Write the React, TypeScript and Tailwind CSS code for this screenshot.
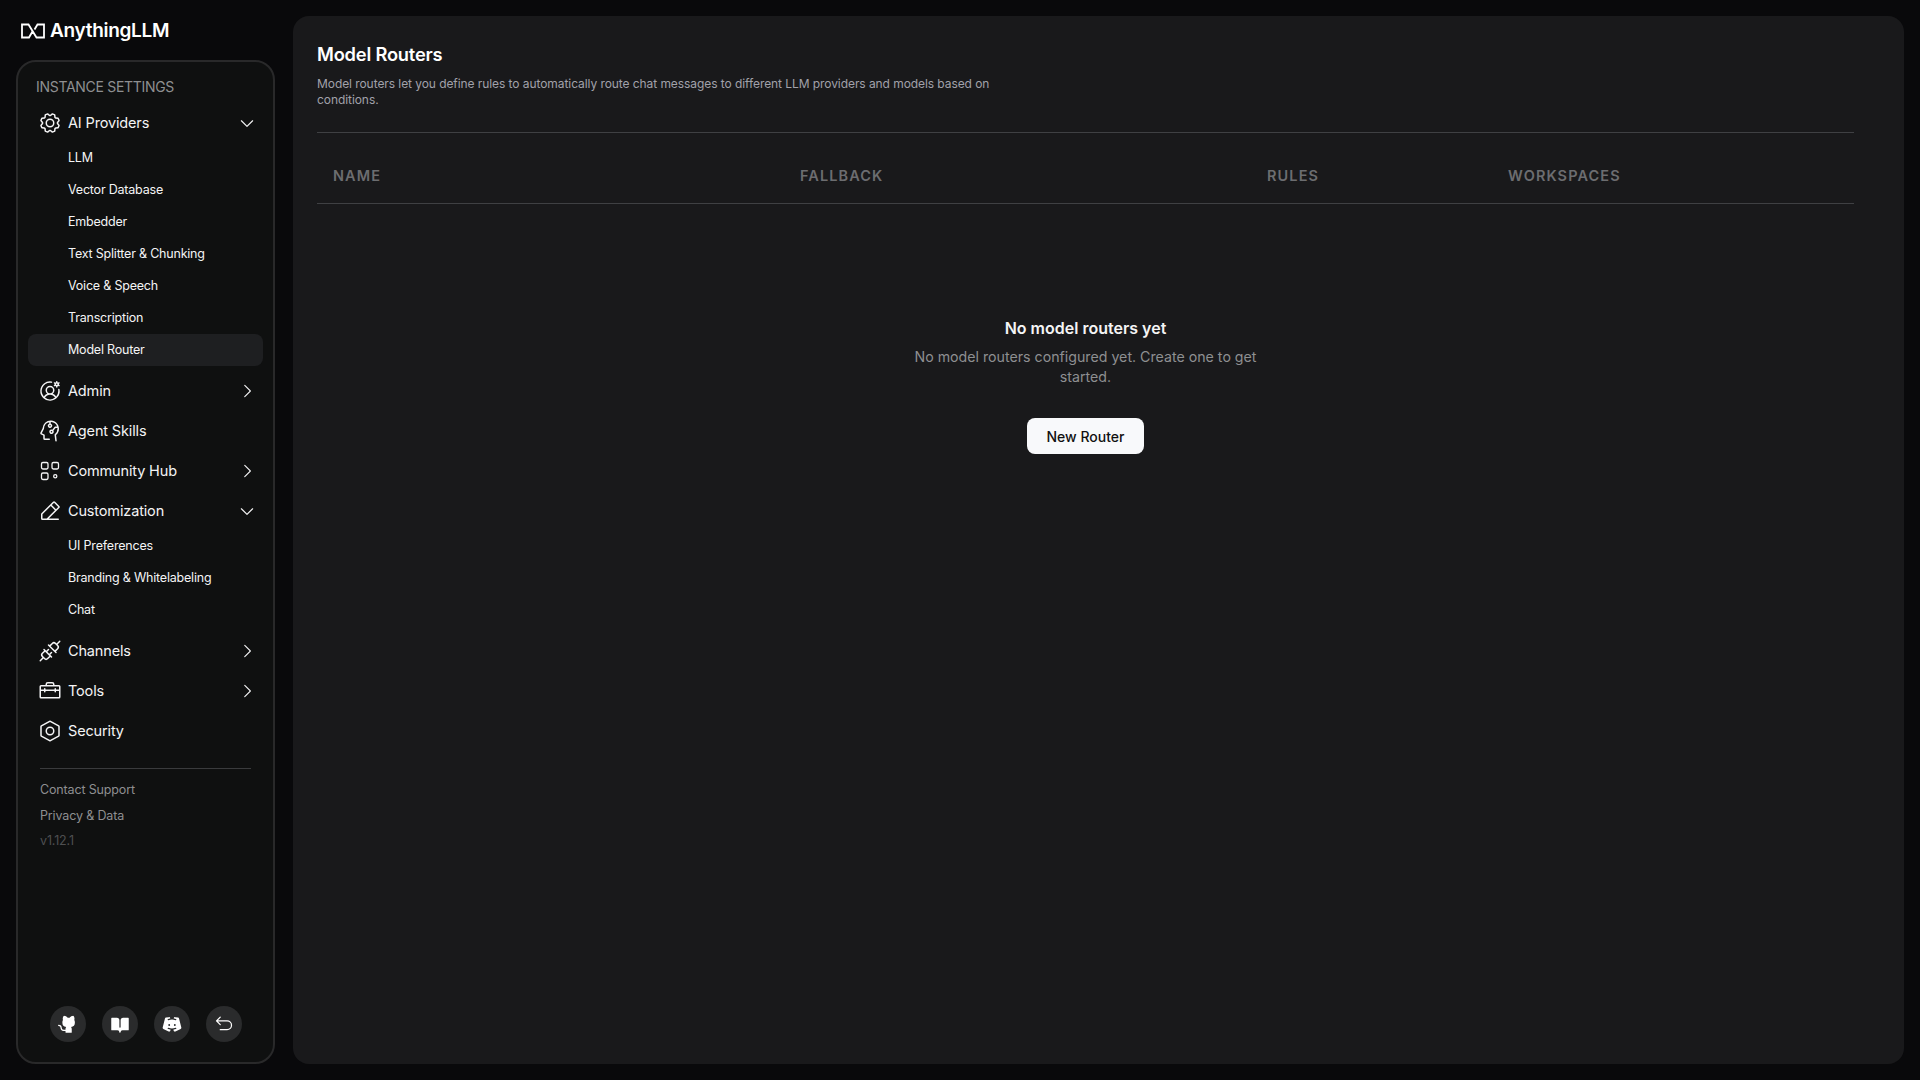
import React from "react";
import { PiGear, PiUserCircleGear, PiHeadCircuit, PiPencilSimpleLine, PiPlugs, PiToolbox, PiNut, PiCaretDown, PiCaretRight, PiGithubLogoFill, PiBookOpenFill, PiDiscordLogoFill, PiArrowUUpLeft } from "react-icons/pi";

const font = "font-['Inter','Liberation_Sans',sans-serif]";

function Hub({ className }: { className?: string }) {
  return (
    <svg viewBox="0 0 24 24" fill="none" stroke="currentColor" strokeWidth="1.3" className={className}>
      <rect x="3.5" y="3.5" width="6.5" height="6.5" rx="1.4" />
      <rect x="14" y="3.5" width="6.5" height="6.5" rx="1.4" />
      <rect x="3.5" y="14" width="6.5" height="6.5" rx="1.4" />
      <circle cx="17.25" cy="17.25" r="1.6" />
    </svg>
  );
}

function Row({ icon: Icon, label, open, caret }: { icon: React.ComponentType<{ className?: string }>; label: string; open?: boolean; caret?: boolean }) {
  return (
    <div className="flex h-10 items-center pl-[10px] pr-[7px] text-[#f4f4f5]">
      <Icon className="h-6 w-6 shrink-0" />
      <span className="ml-[6px] flex-1 text-[14.5px] tracking-[-0.15px]">{label}</span>
      {caret && (open ? <PiCaretDown className="h-[18px] w-[18px]" /> : <PiCaretRight className="h-[18px] w-[18px]" />)}
    </div>
  );
}

function Sub({ label, active }: { label: string; active?: boolean }) {
  return (
    <div className={`flex h-8 items-center rounded-lg pl-10 text-[12.5px] tracking-[-0.2px] text-[#f4f4f5] ${active ? "bg-[#1e1f21]" : ""}`}>{label}</div>
  );
}

function Round({ children }: { children: React.ReactNode }) {
  return <div className="flex h-9 w-9 items-center justify-center rounded-full bg-[#2a2b2c] text-white">{children}</div>;
}

export default function App() {
  return (
    <div className={`flex h-[1080px] w-[1920px] overflow-hidden bg-[#09090b] ${font}`}>
      <aside className="ml-4 flex w-[259px] shrink-0 flex-col">
        <div className="flex h-[60px] items-center gap-[5px] pl-[5px] pt-[2px] text-white">
          <svg viewBox="0 0 24 16" className="h-[16px] w-[24px]" fill="none" stroke="currentColor" strokeWidth="1.8">
            <path d="M12 7.5 L8 14.5 H1 V1.5 H7.5 L15.5 14.5 H23 V1.5 H16.5 L13.5 6.5" />
          </svg>
          <span className="text-[19px] font-semibold tracking-[-0.3px]">AnythingLLM</span>
        </div>
        <nav className="mb-4 flex flex-1 flex-col rounded-[20px] border-2 border-[#29292a] bg-[#0f1010] px-[10px] pt-[13px] pb-[20px]">
          <div className="pb-[4px] pl-2 text-[14px] leading-[24px] tracking-[-0.3px] text-[#8e8f91]">INSTANCE SETTINGS</div>
          <Row icon={PiGear} label="AI Providers" caret open />
          <div className="mt-[-1px] pb-[5px]">
            <Sub label="LLM" />
            <Sub label="Vector Database" />
            <Sub label="Embedder" />
            <Sub label="Text Splitter & Chunking" />
            <Sub label="Voice & Speech" />
            <Sub label="Transcription" />
            <Sub label="Model Router" active />
          </div>
          <Row icon={PiUserCircleGear} label="Admin" caret />
          <Row icon={PiHeadCircuit} label="Agent Skills" />
          <Row icon={Hub} label="Community Hub" caret />
          <Row icon={PiPencilSimpleLine} label="Customization" caret open />
          <div className="mt-[-1px] pb-[5px]">
            <Sub label="UI Preferences" />
            <Sub label="Branding & Whitelabeling" />
            <Sub label="Chat" />
          </div>
          <Row icon={PiPlugs} label="Channels" caret />
          <Row icon={PiToolbox} label="Tools" caret />
          <Row icon={PiNut} label="Security" />
          <div className="mx-[12px] mt-[17px] border-t border-[#3a3b3d]" />
          <div className="mt-[8px] flex flex-col px-[12px] text-[12.5px] leading-[25.5px] tracking-[-0.15px]">
            <span className="text-[#8e8f91]">Contact Support</span>
            <span className="text-[#8e8f91]">Privacy & Data</span>
            <span className="text-[#4e4f51]">v1.12.1</span>
          </div>
          <div className="mt-auto flex justify-center gap-4">
            <Round><PiGithubLogoFill className="h-5 w-5" /></Round>
            <Round><PiBookOpenFill className="h-5 w-5" /></Round>
            <Round><PiDiscordLogoFill className="h-5 w-5" /></Round>
            <Round><PiArrowUUpLeft className="h-5 w-5" /></Round>
          </div>
        </nav>
      </aside>
      <main className="my-4 ml-[18px] mr-4 flex-1 rounded-2xl bg-[#19191b] pl-[24px] pr-[50px] pt-[24px]">
        <h1 className="text-[18.3px] font-semibold leading-[28px] tracking-[-0.2px] text-white">Model Routers</h1>
        <p className="mt-[8px] w-[680px] text-[12px] leading-4 tracking-[-0.07px] text-[#a1a1aa]">Model routers let you define rules to automatically route chat messages to different LLM providers and models based on conditions.</p>
        <div className="mt-[24px] grid h-[72px] grid-cols-[467px_467px_241px_1fr] items-center border-y border-[#3f4043] pl-4 pt-[15px] text-[14.5px] font-semibold tracking-[1.1px] text-[#6c6d70]">
          <span>NAME</span>
          <span>FALLBACK</span>
          <span>RULES</span>
          <span>WORKSPACES</span>
        </div>
        <div className="mx-auto mt-[112px] flex w-[360px] flex-col items-center text-center">
          <h2 className="text-[16px] font-semibold leading-6 text-[#f4f4f5]">No model routers yet</h2>
          <p className="mt-[7px] text-[14.2px] leading-5 text-[#8e8f91]">No model routers configured yet. Create one to get started.</p>
          <button className="mt-[31px] h-9 w-[117px] rounded-lg bg-[#f8f9fb] text-[14px] font-medium text-[#111]">New Router</button>
        </div>
      </main>
    </div>
  );
}
